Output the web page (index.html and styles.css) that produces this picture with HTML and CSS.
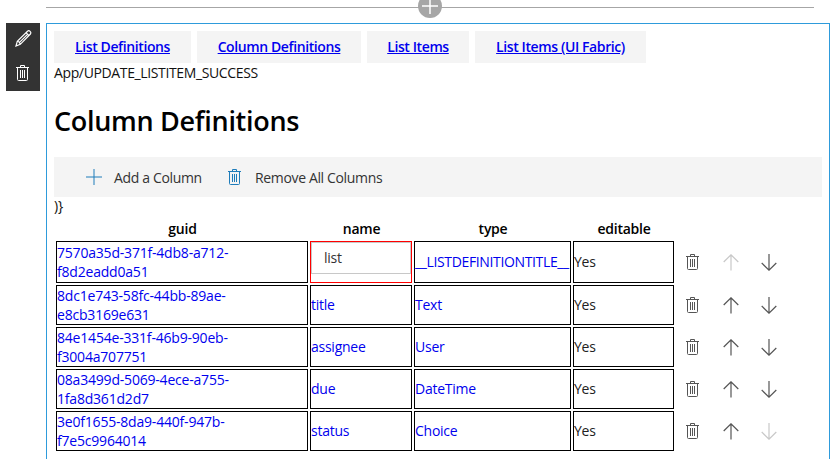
FILE: index.html
```html
<!DOCTYPE html>
<html lang="en">
<head>
<meta charset="utf-8">
<title>Column Definitions</title>
<link rel="stylesheet" href="styles.css">
</head>
<body>
<svg class="sprite" aria-hidden="true">
  <symbol id="trash" viewBox="0 0 13 16"><path d="M0 2.500h13M4.500 2.500v-2h4v2M1.500 2.500v12q0 1 1 1h8q1 0 1-1v-12M4.500 5v8M6.500 5v8M8.500 5v8"/></symbol>
  <symbol id="up" viewBox="0 0 16 17"><path d="M8 1v15.500M.7 8 8 .8 15.300 8"/></symbol>
  <symbol id="down" viewBox="0 0 16 17"><path d="M8 0v16M.7 9 8 16.200 15.300 9"/></symbol>
  <symbol id="plus" viewBox="0 0 16 16"><path d="M8 0v16M0 8h16"/></symbol>
  <symbol id="pencil" viewBox="0 0 17 17"><path d="M1 16 2.300 11.200 12.500 1.200q1.300-1 2.600.2t.3 2.600L5.300 14.300zM2.300 11.200q2.500.5 3 3.100M11 2.700l3 3M4 12.800l9-9"/></symbol>
</svg>
<div class="divider"><span class="add"><svg class="icon add-icon"><use href="#plus"/></svg></span></div>
<div class="webpart">
  <div class="tools">
    <svg class="icon pencil"><use href="#pencil"/></svg>
    <svg class="icon trash"><use href="#trash"/></svg>
  </div>
  <main class="panel">
    <nav class="tabs">
      <a class="tab" href="#">List Definitions</a>
      <a class="tab" href="#">Column Definitions</a>
      <a class="tab" href="#">List Items</a>
      <a class="tab" href="#">List Items (UI Fabric)</a>
    </nav>
    <div class="status">App/UPDATE_LISTITEM_SUCCESS</div>
    <h1 class="title">Column Definitions</h1>
    <div class="commands">
      <svg class="icon plus"><use href="#plus"/></svg><span class="command add-label">Add a Column</span>
      <svg class="icon trash"><use href="#trash"/></svg><span class="command">Remove All Columns</span>
    </div>
    <div class="stray">)}</div>
    <table class="grid">
      <colgroup><col class="c-guid"><col class="c-name"><col class="c-type"><col class="c-edit"><col></colgroup>
      <thead><tr><th>guid</th><th>name</th><th>type</th><th>editable</th><th></th></tr></thead>
      <tbody>
        <tr class="first"><td class="guid">7570a35d-371f-4db8-a712-<br>f8d2eadd0a51</td><td class="editing"><div class="field">list</div></td><td class="long">__LISTDEFINITIONTITLE__</td><td class="yes">Yes</td><td class="actions"><div class="row-icons"><svg class="icon trash"><use href="#trash"/></svg><svg class="icon arrow off"><use href="#up"/></svg><svg class="icon arrow"><use href="#down"/></svg></div></td></tr>
        <tr><td class="guid">8dc1e743-58fc-44bb-89ae-<br>e8cb3169e631</td><td>title</td><td>Text</td><td class="yes">Yes</td><td class="actions"><div class="row-icons"><svg class="icon trash"><use href="#trash"/></svg><svg class="icon arrow"><use href="#up"/></svg><svg class="icon arrow"><use href="#down"/></svg></div></td></tr>
        <tr><td class="guid">84e1454e-331f-46b9-90eb-<br>f3004a707751</td><td>assignee</td><td>User</td><td class="yes">Yes</td><td class="actions"><div class="row-icons"><svg class="icon trash"><use href="#trash"/></svg><svg class="icon arrow"><use href="#up"/></svg><svg class="icon arrow"><use href="#down"/></svg></div></td></tr>
        <tr><td class="guid">08a3499d-5069-4ece-a755-<br>1fa8d361d2d7</td><td>due</td><td>DateTime</td><td class="yes">Yes</td><td class="actions"><div class="row-icons"><svg class="icon trash"><use href="#trash"/></svg><svg class="icon arrow"><use href="#up"/></svg><svg class="icon arrow"><use href="#down"/></svg></div></td></tr>
        <tr><td class="guid">3e0f1655-8da9-440f-947b-<br>f7e5c9964014</td><td>status</td><td>Choice</td><td class="yes">Yes</td><td class="actions"><div class="row-icons"><svg class="icon trash"><use href="#trash"/></svg><svg class="icon arrow"><use href="#up"/></svg><svg class="icon arrow off"><use href="#down"/></svg></div></td></tr>
      </tbody>
    </table>
  </main>
</div>
</body>
</html>
```
FILE: styles.css
```css
* { box-sizing: border-box; }
body { margin: 0; background: #fff; color: #111; font: 14px/19px "Open Sans", "Noto Sans", sans-serif; letter-spacing: -0.25px; }
.sprite { position: absolute; width: 0; height: 0; }
.icon { display: block; flex: none; fill: none; stroke: currentColor; stroke-width: 1; }
.trash { width: 13px; height: 16px; }
.arrow { width: 16px; height: 17px; stroke-width: 1.2; }
.plus { width: 16px; height: 16px; }
.pencil { width: 17px; height: 17px; stroke-width: 1.2; }
.divider { position: relative; height: 23px; margin: 0 26px 0 46px; }
.divider::before { content: ""; display: block; height: 7px; border-bottom: 1px solid #a6a6a6; }
.add { position: absolute; left: 372px; top: -6px; width: 24px; height: 24px; border-radius: 50%; background: #a6a6a6; color: #fff; display: flex; align-items: center; justify-content: center; }
.add-icon { width: 16px; height: 16px; stroke-width: 1.5; }
.webpart { display: flex; align-items: flex-start; padding-left: 6px; }
.tools { width: 34px; height: 68px; margin-right: 6px; background: #333; color: #fff; display: flex; flex-direction: column; align-items: flex-start; padding: 7px 0 0 9px; gap: 18px; }
.tools .trash { margin-left: 1px; }
.panel { width: 784px; height: 436px; border: 1px solid #2e9bdb; border-bottom: 0; padding: 7px 7px 0; }
.tabs { display: flex; gap: 6px; height: 32px; }
.tab { padding: 6px 0 0; text-align: center; background: #f4f4f4; color: #00e; font-weight: 600; letter-spacing: -0.4px; width: 137px; text-decoration: underline; }
.tab:nth-child(2) { width: 164px; }
.tab:nth-child(3) { width: 102px; }
.tab:nth-child(4) { width: 171px; }
.status { height: 20px; letter-spacing: -0.37px; }
.title { margin: 19px 0 18px; color: #000; font-size: 27px; line-height: 37px; font-weight: 600; height: 37px; letter-spacing: -0.3px; }
.commands { display: flex; align-items: center; height: 40px; background: #f4f4f4; padding-left: 32px; color: #1e7cba; }
.command { color: #333; margin-left: 14px; letter-spacing: -0.35px; }
.add-label { margin-left: 12px; width: 88px; margin-right: 26px; white-space: nowrap; }
.stray { height: 20px; line-height: 18px; }
.grid { table-layout: fixed; width: 768px; border-spacing: 2px; border-collapse: separate; }
.c-guid { width: 252px; }
.c-name { width: 102px; }
.c-type { width: 157px; }
.c-edit { width: 101px; }
th { padding: 0 0 0 1px; height: 20px; line-height: 20px; font-weight: 600; color: #000; }
td { height: 40px; padding: 0 0 1px; border: 1px solid #000; color: #00e; vertical-align: middle; white-space: nowrap; }
td.guid { padding: 0; letter-spacing: -0.2px; }
.first .guid { padding-bottom: 1px; }
.first td { height: 42px; }
.long { letter-spacing: -0.36px; }
td.yes { color: #222; }
.first .editing { border-color: #f00; vertical-align: top; }
.field { height: 32px; border: 1px solid #c8c8c8; padding: 5px 0 0 12px; color: #333; }
td.actions { border: 0; padding: 1px 0 0; }
.row-icons { display: flex; padding-left: 10px; color: #555; }
.row-icons .trash { margin-right: 24px; }
.row-icons .arrow + .arrow { margin-left: 22px; }
.row-icons .off { color: #c8c8c8; }
```
